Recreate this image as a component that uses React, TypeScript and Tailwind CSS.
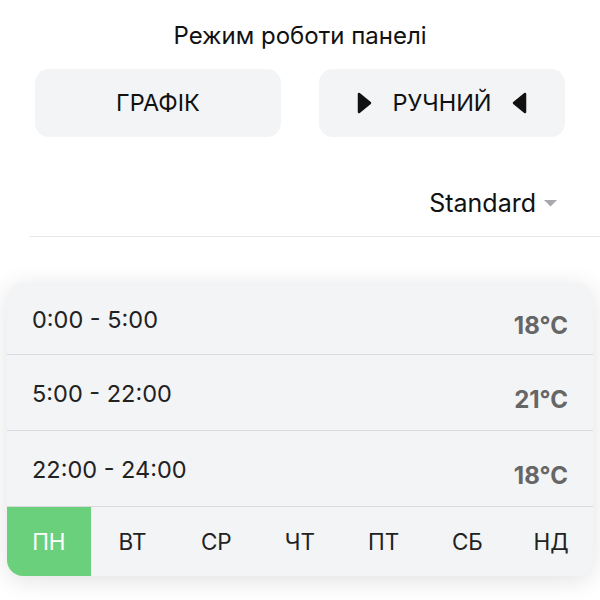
import React, { useState } from 'react';

const slots = [
  { time: '0:00 - 5:00', temp: '18°C', h: 'h-[72px]' },
  { time: '5:00 - 22:00', temp: '21°C', h: 'h-[76px]' },
  { time: '22:00 - 24:00', temp: '18°C', h: 'h-[76px]' },
];

const days = ['ПН', 'ВТ', 'СР', 'ЧТ', 'ПТ', 'СБ', 'НД'];

function PlayRight() {
  return (
    <svg width="15" height="22" viewBox="0 0 15 22">
      <path d="M2 2 L13 11 L2 20 Z" fill="#111" stroke="#111" strokeWidth="2.5" strokeLinejoin="round" />
    </svg>
  );
}

function PlayLeft() {
  return (
    <svg width="15" height="22" viewBox="0 0 15 22">
      <path d="M13 2 L2 11 L13 20 Z" fill="#111" stroke="#111" strokeWidth="2.5" strokeLinejoin="round" />
    </svg>
  );
}

export default function App() {
  const [day, setDay] = useState(0);

  return (
    <div className="w-[600px] h-[600px] bg-white overflow-hidden font-['Inter',sans-serif] text-[#111]">
      {/* Mode header */}
      <div className="pt-[20px] text-center text-[24px] leading-[32px]">Режим роботи панелі</div>

      <div className="mt-[17px] px-[35px] grid grid-cols-2 gap-[38px]">
        <button className="h-[68px] rounded-[14px] bg-[#f3f4f6] text-[23.5px] flex items-center justify-center">
          ГРАФІК
        </button>
        <button className="h-[68px] rounded-[14px] bg-[#f3f4f6] text-[23.5px] flex items-center justify-center gap-[20px]">
          <PlayRight />
          <span>РУЧНИЙ</span>
          <PlayLeft />
        </button>
      </div>

      {/* Preset picker */}
      <div className="mt-[49px] pr-[43px] flex justify-end items-center gap-[8px]">
        <span className="text-[25px] leading-[34px]">Standard</span>
        <svg width="13" height="7" viewBox="0 0 13 7">
          <path d="M0 0 L13 0 L6.5 6.5 Z" fill="#a8a8ad" />
        </svg>
      </div>
      <div className="mt-[16px] ml-[30px] h-px bg-[#e6e6e8]" />

      {/* Schedule card */}
      <div className="mt-[46px] mx-[7px] rounded-[16px] bg-[#f3f4f6] shadow-[0_4px_24px_rgba(0,0,0,0.12)] overflow-hidden">
        {slots.map((s) => (
          <div key={s.time} className={`${s.h} px-[25px] flex items-center justify-between border-b border-[#d8d9dd]`}>
            <span className="text-[23.5px] text-[#222] mt-[2px]">{s.time}</span>
            <span className="text-[24px] font-bold text-[#666] mt-[15px]">{s.temp}</span>
          </div>
        ))}
        <div className="grid grid-cols-7 h-[69px]">
          {days.map((d, i) => (
            <button
              key={d}
              onClick={() => setDay(i)}
              className={`flex items-center justify-center text-[22.5px] ${
                i === day ? 'bg-[#6bd07b] text-white' : 'text-[#222]'
              }`}
            >
              {d}
            </button>
          ))}
        </div>
      </div>
    </div>
  );
}
